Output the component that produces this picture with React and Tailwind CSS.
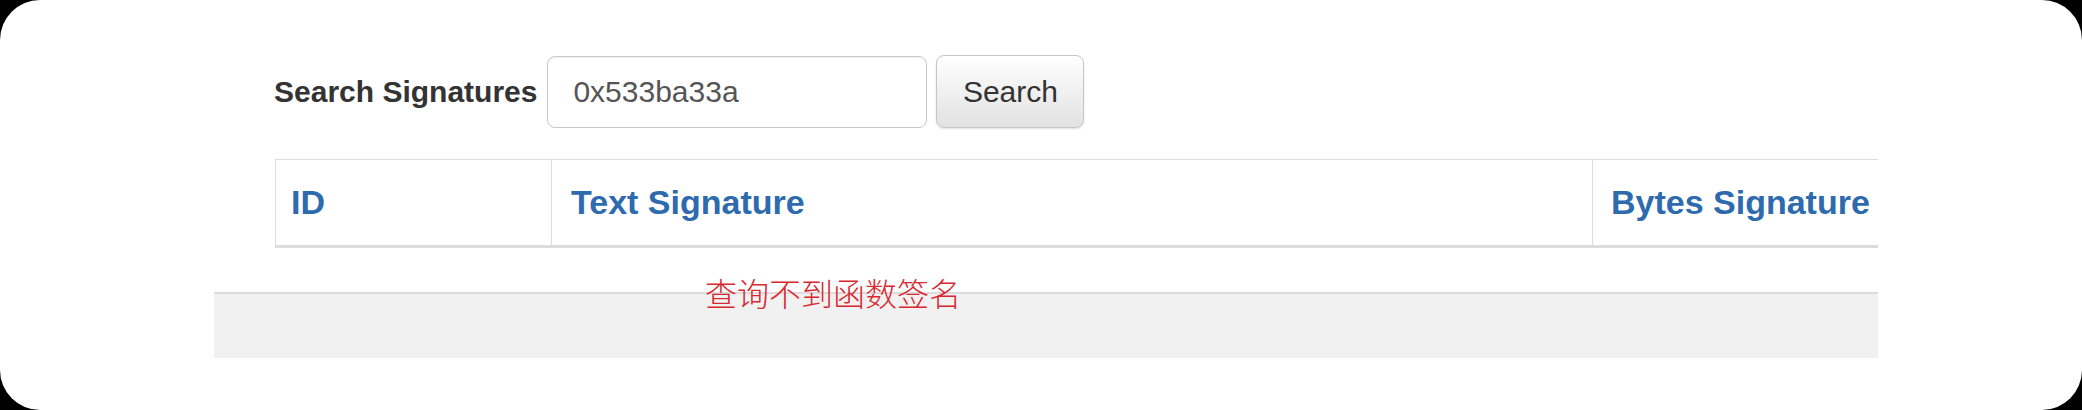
import React from "react";

const font = { fontFamily: '"Liberation Sans", Arial, sans-serif' };

const columns = [
  { name: "ID", cell: "w-[276px] pl-[15px]" },
  { name: "Text Signature", cell: "w-[1041px] pl-[19px]" },
  { name: "Bytes Signature", cell: "w-[400px] pl-[18px]" },
];

const SearchForm = ({ value }) => (
  <div className="flex items-center h-[73px] pl-[60px]">
    <label className="text-[30px] font-bold text-[#333] leading-none mr-[10px]">
      Search Signatures
    </label>
    <div className="w-[380px] h-[72px] border border-[#c9c9c9] rounded-[8px] bg-white flex items-center pl-[25px] text-[30px] text-[#555] shadow-[inset_0_1px_1px_rgba(0,0,0,0.06)]">
      {value}
    </div>
    <button className="ml-[9px] w-[148px] h-[73px] rounded-[8px] border border-[#c6c6c6] bg-gradient-to-b from-white to-[#e2e2e2] text-[30px] text-[#333] shadow-[0_1px_2px_rgba(0,0,0,0.12)]">
      Search
    </button>
  </div>
);

const ResultsTable = () => (
  <div className="mt-[31px] ml-[61px] w-[1800px] border-t border-l border-b-[3px] border-[#dcdcdc] flex">
    {columns.map((col, index) => (
      <div
        key={index}
        className={`${col.cell} shrink-0 h-[85px] flex items-center border-r border-[#dcdcdc] text-[34px] font-bold text-[#2d6aae]`}
      >
        {col.name}
      </div>
    ))}
  </div>
);

export default function App() {
  return (
    <div className="w-[2082px] h-[410px] bg-black" style={font}>
      <div className="relative w-full h-full bg-white rounded-[40px]">
        <div className="ml-[214px] w-[1664px] pt-[55px] overflow-hidden">
          <SearchForm value="0x533ba33a" />
          <ResultsTable />
          <div className="mt-[44px] h-[66px] bg-[#f2f1f2] border-t-2 border-[#dddcdd]" />
        </div>
        {/* red annotation laid over the empty result */}
        <span
          className="absolute left-[705px] top-[276px] text-[32px] leading-[32px] text-[#d9282f] whitespace-nowrap"
          style={{ fontFamily: '"Noto Sans CJK SC", sans-serif', fontWeight: 300 }}
        >
          查询不到函数签名
        </span>
      </div>
    </div>
  );
}
